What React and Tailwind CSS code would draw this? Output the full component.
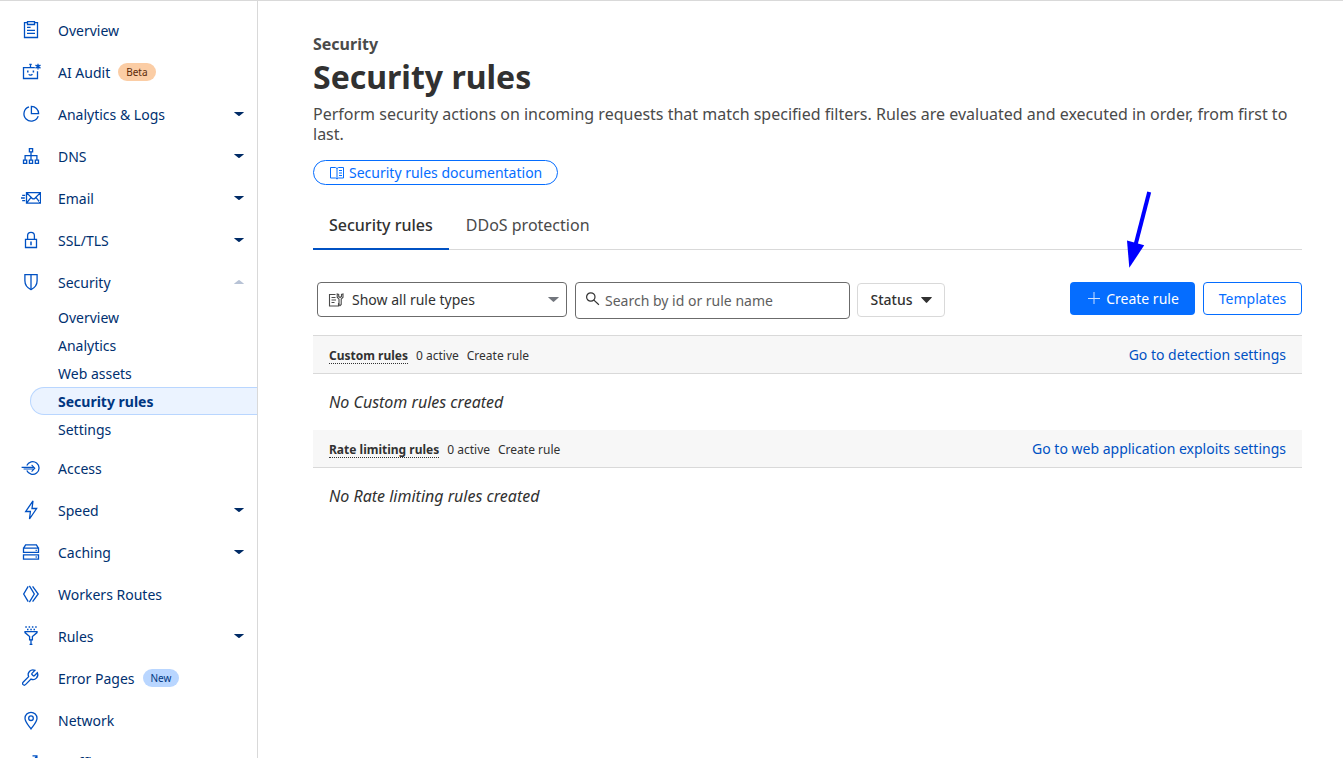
import React from 'react';

const Glyph = ({ children }) => (
  <svg
    className="w-5 h-5 shrink-0"
    viewBox="0 0 20 20"
    fill="none"
    stroke="#0051c3"
    strokeWidth="1.3"
    aria-hidden="true"
  >
    {children}
  </svg>
);

const icons = {
  overview: (
    <Glyph>
      <path d="M6.5 2.7h-3v14.8h13V2.7h-3" />
      <path d="M6.5 1.6h7v2.9h-7zM6 7.4h3.6M6 10.4h8M6 13.4h8" />
    </Glyph>
  ),
  audit: (
    <Glyph>
      <path d="M13.8 5.6H2.5v10.9h14V9.2M9.5 5.5V2.4M8.3 2.4h2.4" />
      <path d="M6.8 8.6v2M12.4 8.6v2" strokeWidth="1.5" />
      <path d="M7.8 12.2c.6 1.2 2.9 1.2 3.6 0" />
      <path d="M17 1.8v5.6M14.5 3.1l5 3M14.5 6.1l5-3" />
    </Glyph>
  ),
  analytics: (
    <Glyph>
      <path d="M8 2.9a7.3 7.3 0 1 0 9.2 9.2" />
      <path d="M10.4 2.4v7.2h7.2a7.2 7.2 0 0 0-7.2-7.2z" />
    </Glyph>
  ),
  dns: (
    <Glyph>
      <path d="M8.4 2.6h3.2v3.2H8.4zM2.5 14.1h3.2v3.2H2.5zM8.4 14.1h3.2v3.2H8.4zM14.3 14.1h3.2v3.2h-3.2z" />
      <path d="M10 5.8v8.3M4.1 14.1V9.7h11.8v4.4" />
    </Glyph>
  ),
  email: (
    <Glyph>
      <path d="M5.5 4.6h14v10.6h-14zM5.5 4.6l5.6 5.6q1.4 1.3 2.8 0l5.6-5.6M5.5 15.2l4.4-5.6M19.5 15.2l-4.4-5.6" />
      <path d="M1.2 7.4h3M0 10h3.8M1.2 12.6h3" />
    </Glyph>
  ),
  ssl: (
    <Glyph>
      <path d="M4.5 9.3h11v8.2h-11zM6.6 9.3V5.8a3.4 3.4 0 0 1 6.8 0v3.5" />
      <path d="M10 11.6v3.6" strokeWidth="1.5" />
    </Glyph>
  ),
  security: (
    <Glyph>
      <path d="M3.9 2.6h12.2v6.2c0 4-2.6 7.2-6.1 8.8-3.5-1.6-6.1-4.8-6.1-8.8z" />
      <path d="M10 2.6v15" />
    </Glyph>
  ),
  access: (
    <Glyph>
      <path d="M5.8 7.4a6.4 6.4 0 1 1 0 5.2" />
      <path d="M.6 9.4h12.6M2.6 11h10.6M10.6 6.8l3.2 3.4-3.2 3.4" strokeWidth="1.1" />
    </Glyph>
  ),
  speed: (
    <Glyph>
      <path d="M12 .9L4.7 11.5h4.7L8.5 19l7.1-10.5H11z" />
    </Glyph>
  ),
  caching: (
    <Glyph>
      <path d="M2.6 6.2l2-3.4h10.8l2 3.4M2.5 6.2h15v4.2h-15zM2.5 12.8h15v4.4h-15z" />
      <path d="M14.6 8.3h1.2M14.6 15h1.2" />
    </Glyph>
  ),
  workers: (
    <Glyph>
      <path d="M7.2 2.4L2.7 10l4.5 7.6" />
      <path d="M8.4 1.8l4.9 8.2-4.9 8.2M11.6 2.4L17.2 10l-5.6 7.6" />
    </Glyph>
  ),
  rules: (
    <Glyph>
      <path d="M4.3 1h1.5M7.6 1h1.5M10.9 1h1.5M14.2 1h1.5M6 3.4h1.5M9.3 3.4h1.5M12.5 3.4H14" strokeWidth="1.5" />
      <path d="M4 5.6h12v1l-4.6 4v3.2H8.6v-3.2L4 6.6z" />
      <path d="M10 13.5V19M8.6 18.4h2.8" />
    </Glyph>
  ),
  wrench: (
    <Glyph>
      <path
        transform="translate(-.8 .3) scale(.8)"
        strokeWidth="1.6"
        d="M14.7 6.3a1 1 0 0 0 0 1.4l1.6 1.6a1 1 0 0 0 1.4 0l3.77-3.77a6 6 0 0 1-7.94 7.94l-6.91 6.91a2.12 2.12 0 0 1-3-3l6.91-6.91a6 6 0 0 1 7.94-7.94l-3.76 3.76z"
      />
    </Glyph>
  ),
  network: (
    <Glyph>
      <path d="M10 19C7.6 15.6 4 12 4 8.3a6 6 0 0 1 12 0C16 12 12.4 15.6 10 19z" />
      <circle cx="10" cy="8.2" r="2.3" />
    </Glyph>
  ),
  traffic: (
    <Glyph>
      <path d="M2.5 15l4-5 3 2.5 6-8M11.5 3.8h4.4v4.4" />
    </Glyph>
  ),
};

const navTop = [
  { label: 'Overview', icon: 'overview' },
  { label: 'AI Audit', icon: 'audit', badge: 'Beta', badgeClass: 'bg-[#fbcda5] text-[#5c2b09]' },
  { label: 'Analytics & Logs', icon: 'analytics', menu: true },
  { label: 'DNS', icon: 'dns', menu: true },
  { label: 'Email', icon: 'email', menu: true },
  { label: 'SSL/TLS', icon: 'ssl', menu: true },
  { label: 'Security', icon: 'security', menu: true, open: true },
];

const securityPages = ['Overview', 'Analytics', 'Web assets', 'Security rules', 'Settings'];

const navBottom = [
  { label: 'Access', icon: 'access' },
  { label: 'Speed', icon: 'speed', menu: true },
  { label: 'Caching', icon: 'caching', menu: true },
  { label: 'Workers Routes', icon: 'workers' },
  { label: 'Rules', icon: 'rules', menu: true },
  { label: 'Error Pages', icon: 'wrench', badge: 'New', badgeClass: 'bg-[#b9d6ff] text-[#003681]' },
  { label: 'Network', icon: 'network' },
  { label: 'Traffic', icon: 'traffic', menu: true },
];

const Caret = ({ className, up }) => (
  <svg className={className} viewBox="0 0 10 5" preserveAspectRatio="none" fill="currentColor" aria-hidden="true">
    <path d={up ? 'M.6 5h8.8q.8 0 .3-.6L5.6.4Q5-.2 4.4.4L.3 4.4Q-.2 5 .6 5z' : 'M.6 0h8.8q.8 0 .3.6L5.6 4.6Q5 5.2 4.4 4.6L.3.6Q-.2 0 .6 0z'} />
  </svg>
);

const NavItem = ({ item }) => (
  <li>
    <a href="#" className="flex items-center h-[42px] pl-[21px] pr-[13px] text-sm">
      {icons[item.icon]}
      <span className="ml-[17px] pt-0.5">{item.label}</span>
      {item.badge && (
        <span className={`ml-2 px-2 rounded-full text-[10px] leading-[18px] ${item.badgeClass}`}>
          {item.badge}
        </span>
      )}
      {item.menu && (
        <Caret
          up={item.open}
          className={`ml-auto w-2.5 h-1 ${item.open ? 'text-[#b8c3d6]' : 'text-[#002b66]'}`}
        />
      )}
    </a>
  </li>
);

const Sidebar = () => (
  <nav className="w-[258px] shrink-0 border-r border-[#d9d9d9] pt-2 overflow-hidden text-[#003070]">
    <ul>
      {navTop.map((item) => (
        <NavItem key={item.label} item={item} />
      ))}
    </ul>
    <ul className="mb-1 pl-[30px] text-sm">
      {securityPages.map((page) => (
        <li key={page}>
          <a
            href="#"
            className={`flex items-center h-7 pl-[27px] pt-0.5 border border-r-0 rounded-l-full ${
              page === 'Security rules'
                ? 'border-[#b9d6ff] bg-[#ebf3ff] font-bold text-[#003681]'
                : 'border-transparent'
            }`}
          >
            {page}
          </a>
        </li>
      ))}
    </ul>
    <ul>
      {navBottom.map((item) => (
        <NavItem key={item.label} item={item} />
      ))}
    </ul>
  </nav>
);

const RuleSection = ({ title, link, first }) => (
  <section>
    <div
      className={`flex items-center justify-between px-4 bg-[#f7f7f7] border-b border-[#d9d9d9] ${
        first ? 'h-[39px] border-t' : 'h-[38px]'
      }`}
    >
      <div className="flex items-baseline gap-2 pt-[3px] text-xs">
        <h2 className="font-bold leading-[14px] border-b border-dotted border-[#313131]">{title}</h2>
        <span>0 active</span>
        <button type="button">Create rule</button>
      </div>
      <a href="#" className="text-sm text-[#0051c3]">
        {link}
      </a>
    </div>
    <p className="h-14 px-4 text-base leading-[56px] italic">No {title} created</p>
  </section>
);

const Toolbar = () => (
  <div className="flex items-start mt-8 mb-4 pl-1 text-sm">
    <div className="relative w-[250px] mr-2">
      <svg
        className="absolute left-[11px] top-2.5 w-4 h-4 pointer-events-none"
        viewBox="0 0 16 16"
        fill="none"
        stroke="#4a4a4a"
        strokeWidth="1.1"
        aria-hidden="true"
      >
        <path d="M7.5 2.500h-6v11.500h9V11M3.500 5.500h4M3.500 8h4.500M3.500 10.500h3" />
        <path d="M9.200 2v3.200l1.800 2v5.300l1 1.200 1.200-1.200V7.200l1.800-2V2l-1.500.5v2l-1.400 1-1.400-1v-2z" />
      </svg>
      <select
        aria-label="Rule types"
        className="block w-full h-[35px] pl-[34px] pr-8 appearance-none rounded border border-[#6b6b6b] bg-white"
        defaultValue="all"
      >
        <option value="all">Show all rule types</option>
      </select>
      <Caret className="absolute right-2 top-[15px] w-[11px] h-[5px] text-[#72767d] pointer-events-none" />
    </div>
    <div className="relative w-[275px] mr-[7px]">
      <svg
        className="absolute left-2.5 top-2.5 w-[15px] h-[15px] pointer-events-none"
        viewBox="0 0 15 15"
        fill="none"
        stroke="#313131"
        strokeWidth="1.2"
        aria-hidden="true"
      >
        <circle cx="5.8" cy="5" r="4.2" />
        <path d="M8.9 8.1l5 4.7" />
      </svg>
      <input
        type="text"
        aria-label="Search rules"
        placeholder="Search by id or rule name"
        className="block w-full h-[37px] pl-[29px] pr-3 rounded border border-[#6b6b6b] placeholder:text-[#5e5e5e]"
      />
    </div>
    <button
      type="button"
      className="flex items-center justify-center gap-2 w-[88px] h-[34px] mt-px rounded border border-[#d9d9d9] font-medium"
    >
      Status
      <Caret className="w-[11px] h-1.5" />
    </button>
    <div className="flex gap-2 ml-auto">
      <div className="relative">
        <svg className="absolute left-[50px] bottom-full mb-3 w-10 h-20" viewBox="0 0 40 80" aria-hidden="true">
          <path d="M29.2 2L15.5 55" stroke="#0000ff" strokeWidth="4" />
          <path d="M7 50.5l17.2 4.8L9.3 77.8z" fill="#0000ff" />
        </svg>
        <button
          type="button"
          className="flex items-center justify-center gap-1 w-[125px] h-[33px] rounded bg-[#056dff] text-white whitespace-nowrap"
        >
          <svg className="w-4 h-4" viewBox="0 0 16 16" stroke="currentColor" strokeWidth="1" opacity=".8" aria-hidden="true">
            <path d="M8 1v12M2 7.5h12" />
          </svg>
          Create rule
        </button>
      </div>
      <button type="button" className="w-[99px] h-[33px] rounded border border-[#056dff] text-[#056dff]">
        Templates
      </button>
    </div>
  </div>
);

const App = () => (
  <div className="flex h-screen overflow-hidden border-t border-[#d9d9d9] bg-white font-['Noto_Sans',sans-serif] text-[#313131]">
    <Sidebar />
    <main className="flex-1 min-w-0 pt-[33px] pl-[55px] pr-[41px]">
      <p className="font-bold leading-5 text-[#4a4a4a]">Security</p>
      <h1 className="text-[32px] leading-[46px] font-bold">Security rules</h1>
      <p className="mt-1 leading-5 text-[#4a4a4a]">
        Perform security actions on incoming requests that match specified filters. Rules are evaluated and
        executed in order, from first to last.
      </p>
      <a
        href="#"
        className="flex items-center gap-1 w-fit h-[25px] mt-4 px-[15px] rounded-full border border-[#056dff] text-sm text-[#056dff]"
      >
        <svg className="w-4 h-4" viewBox="0 0 16 16" fill="none" stroke="currentColor" aria-hidden="true">
          <path d="M1.5 2.5h5l1.5 1 1.5-1h5v10.5h-5L8 14l-1.5-1h-5zM8 3.5V14M10 5.5h3M10 8h3M10 10.5h3" />
        </svg>
        Security rules documentation
      </a>
      <div role="tablist" className="flex gap-px mt-4 h-[49px] shadow-[inset_0_-1px_0_#d9d9d9]">
        <button
          type="button"
          role="tab"
          aria-selected="true"
          className="px-4 border-b-2 border-[#0051c3] font-medium"
        >
          Security rules
        </button>
        <button
          type="button"
          role="tab"
          aria-selected="false"
          className="px-4 border-b-2 border-transparent text-[#4a4a4a]"
        >
          DDoS protection
        </button>
      </div>
      <Toolbar />
      <RuleSection title="Custom rules" link="Go to detection settings" first />
      <RuleSection title="Rate limiting rules" link="Go to web application exploits settings" />
    </main>
  </div>
);

export default App;
